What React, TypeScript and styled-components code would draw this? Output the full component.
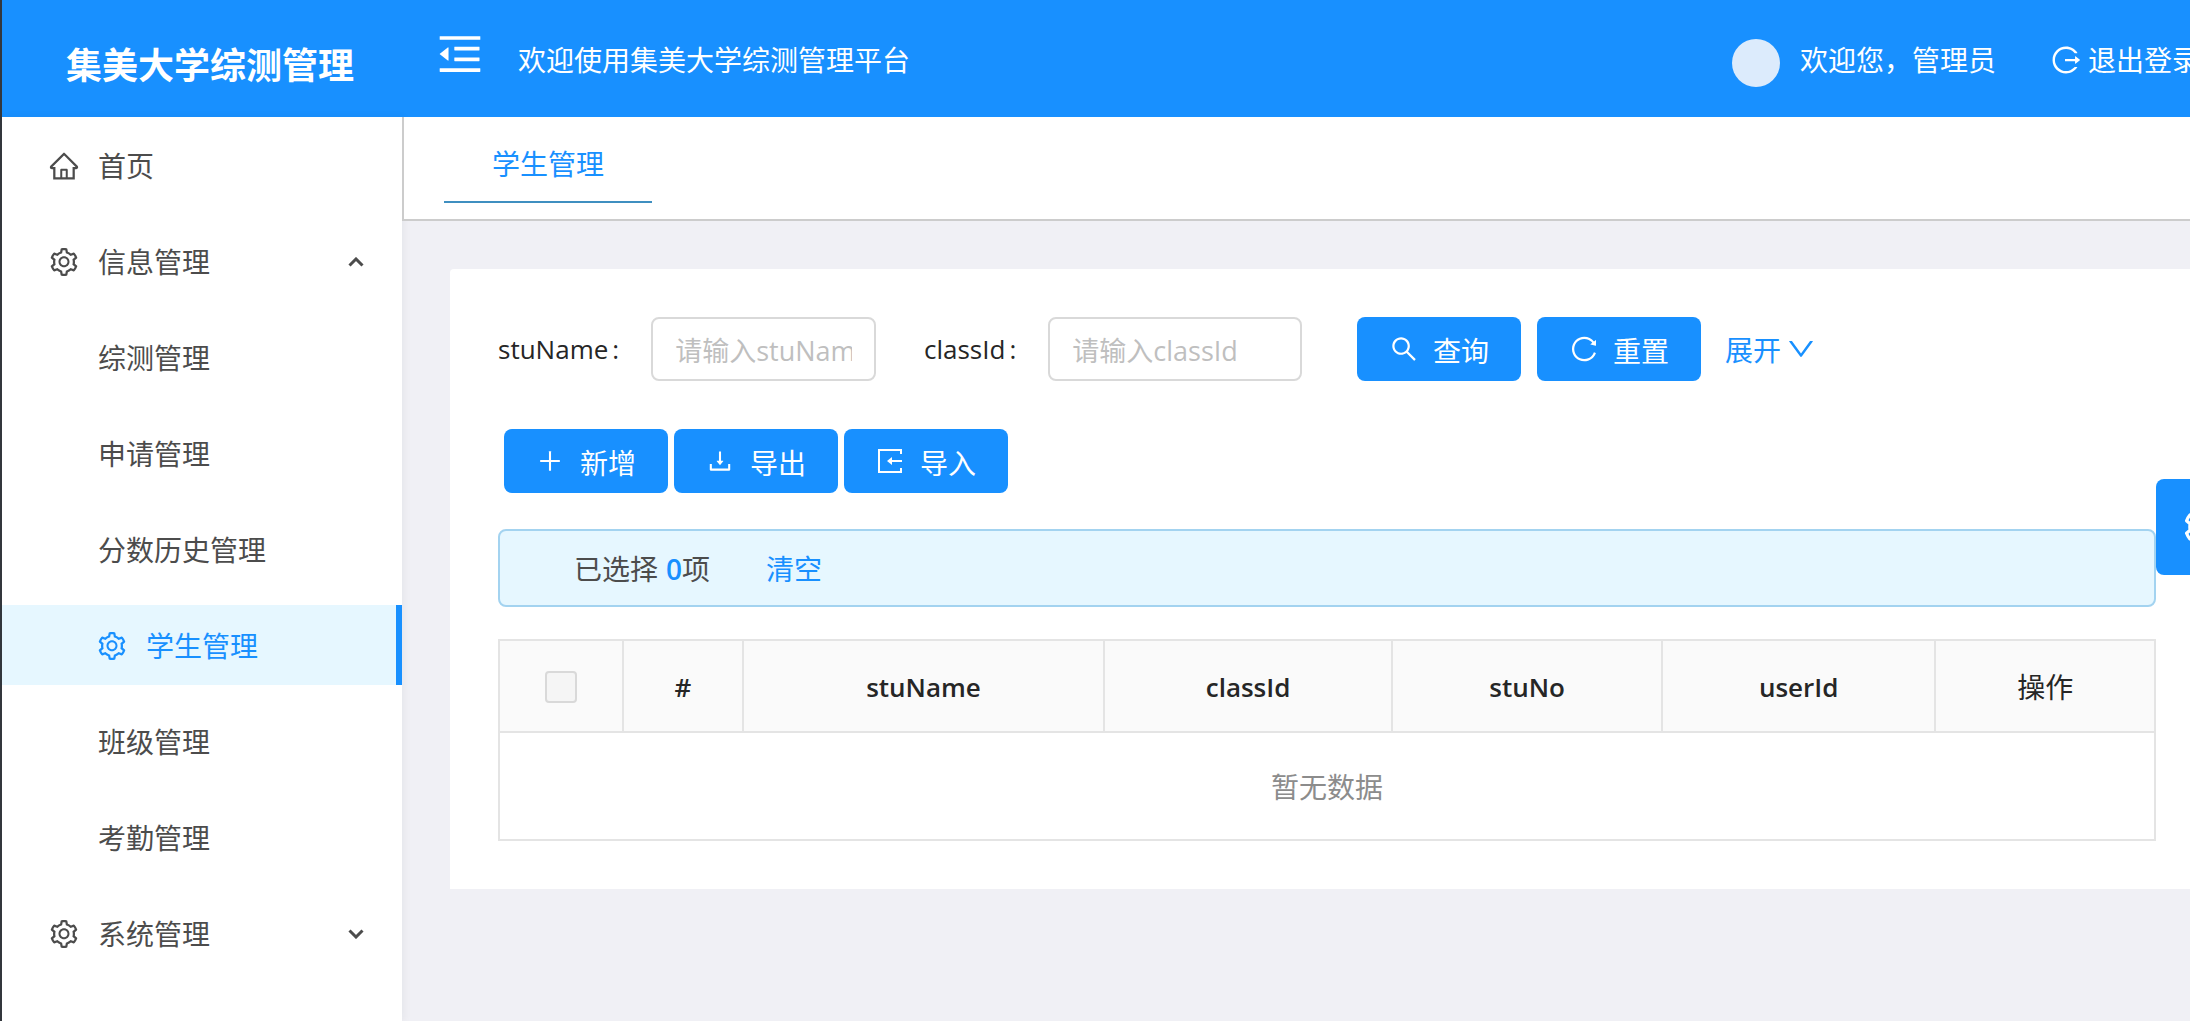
import React, { useState } from 'react';
import styled, { createGlobalStyle, css } from 'styled-components';
import {
  AiOutlineDown,
  AiOutlineDownload,
  AiOutlineHome,
  AiOutlineLogout,
  AiOutlineMenuFold,
  AiOutlinePlus,
  AiOutlineReload,
  AiOutlineSearch,
  AiOutlineSetting,
} from 'react-icons/ai';

const primary = '#1890ff';
const line = '#e4e4e4';

const GlobalStyle = createGlobalStyle`
  *, *::before, *::after { box-sizing: border-box; }
  body {
    margin: 0;
    overflow: hidden;
    font-family: "Open Sans", "Noto Sans CJK SC", sans-serif;
    font-size: 28px;
    line-height: 40px;
    color: #262626;
    background: #f0f0f5;
  }
  button, input { font: inherit; }
  button { cursor: pointer; }
  svg { flex: none; display: block; }
`;

const Page = styled.div`
  display: flex;
  flex-direction: column;
  min-height: 100vh;
  border-left: 2px solid #33373d;
`;

const Header = styled.header`
  display: flex;
  align-items: center;
  height: 117px;
  padding-top: 2px;
  background: ${primary};
  color: #fff;
  overflow: hidden;
  white-space: nowrap;
`;

const Logo = styled.h1`
  width: 400px;
  margin: 0;
  padding: 12px 0 0 64px;
  font-size: 36px;
  font-weight: 700;
`;

const FoldButton = styled.button`
  display: flex;
  margin: 0 32px 12px;
  padding: 0;
  border: 0;
  background: none;
  color: inherit;
  font-size: 52px;
`;

const UserArea = styled.div`
  display: flex;
  align-items: center;
  margin-left: auto;
  margin-right: -10px;
`;

const Avatar = styled.span`
  width: 48px;
  height: 48px;
  margin: 6px 20px 0 0;
  border-radius: 50%;
  background: #dcebfc;
`;

const Logout = styled.a`
  display: flex;
  align-items: center;
  gap: 6px;
  margin-left: 54px;
  color: inherit;
  text-decoration: none;
  svg { font-size: 32px; }
`;

const Body = styled.div`
  display: flex;
  flex: 1;
`;

const Sidebar = styled.nav`
  flex: none;
  width: 400px;
  padding: 8px 0;
  background: #fff;
  box-shadow: 2px 0 8px rgba(29, 35, 41, 0.05);
`;

const MenuList = styled.ul`
  display: flex;
  flex-direction: column;
  gap: 16px;
  margin: 0;
  padding: 0;
  list-style: none;
`;

const MenuIcon = styled.span`
  display: flex;
  margin: 0 -2px;
  font-size: 32px;
`;

const MenuLink = styled.a<{ $nested?: boolean; $active?: boolean }>`
  display: flex;
  align-items: center;
  gap: 20px;
  height: 80px;
  padding: 2px 38px 0 ${(p) => (p.$nested ? 96 : 48)}px;
  color: #4c4c4c;
  text-decoration: none;
  ${(p) =>
    p.$active &&
    css`
      color: ${primary};
      background: #e6f7ff;
      border-right: 6px solid ${primary};
    `}
`;

const Arrow = styled.svg<{ $open?: boolean }>`
  width: 16px;
  height: 10px;
  margin-left: auto;
  fill: none;
  stroke: currentColor;
  stroke-width: 3;
  ${(p) => p.$open && 'transform: rotate(180deg);'}
`;

const Main = styled.main`
  flex: 1;
  min-width: 0;
`;

const TabBar = styled.div`
  display: flex;
  align-items: flex-start;
  height: 104px;
  padding-left: 40px;
  background: #fff;
  border-left: 2px solid #ccc;
  border-bottom: 2px solid #ccc;
`;

const Tab = styled.button`
  height: 86px;
  padding: 10px 48px 0;
  border: 0;
  border-bottom: 2px solid #3f8fc0;
  background: none;
  color: ${primary};
`;

const Card = styled.section`
  margin: 48px 0 0 48px;
  padding: 48px 34px 48px 48px;
  background: #fff;
  border-radius: 4px 0 0 0;
`;

const SearchForm = styled.form`
  display: flex;
  align-items: center;
`;

const Field = styled.div`
  display: flex;
  align-items: center;
  width: 378px;
  margin-right: 48px;
`;

const FieldLabel = styled.label`
  flex: none;
  margin-right: 32px;
  font-size: 26px;
`;

const Colon = styled.span`
  margin-left: 4px;
`;

const TextInput = styled.input`
  flex: 1;
  min-width: 0;
  height: 64px;
  padding: 2px 22px 0;
  border: 2px solid #d9d9d9;
  border-radius: 8px;
  outline: 0;
  background: #fff;
  color: inherit;
  font-size: 27px;
  &::placeholder { color: #bfbfbf; opacity: 1; }
`;

const Button = styled.button<{ $large?: boolean }>`
  display: flex;
  align-items: center;
  justify-content: center;
  gap: ${(p) => (p.$large ? 14 : 16)}px;
  width: 164px;
  height: 64px;
  padding: 4px 0 0;
  border: 0;
  border-radius: 8px;
  background: ${primary};
  color: #fff;
  svg {
    margin-bottom: 4px;
    font-size: ${(p) => (p.$large ? 30 : 28)}px;
  }
`;

const SearchActions = styled.div`
  display: flex;
  align-items: center;
  gap: 16px;
  margin-left: 7px;
`;

const Link = styled.a`
  display: flex;
  align-items: center;
  gap: 4px;
  color: ${primary};
  text-decoration: none;
`;

const Expand = styled(Link)`
  margin-left: 8px;
  padding-top: 2px;
  svg {
    margin-bottom: 2px;
    font-size: 32px;
  }
`;

const Toolbar = styled.div`
  display: flex;
  gap: 6px;
  margin: 48px 6px 36px;
`;

const Alert = styled.div`
  display: flex;
  align-items: center;
  gap: 56px;
  height: 78px;
  padding: 2px 0 0 74px;
  border: 2px solid #a3d3f0;
  border-radius: 8px;
  background: #e6f7ff;
  color: #4c4c4c;
`;

const Count = styled.b`
  margin-left: 8px;
  font-weight: 600;
  font-size: 28px;
  color: ${primary};
`;

const Table = styled.table`
  width: 100%;
  margin-top: 32px;
  table-layout: fixed;
  border-collapse: separate;
  border-spacing: 0;
  border-top: 2px solid ${line};
  border-left: 2px solid ${line};
`;

const Th = styled.th<{ $width?: string; $plain?: boolean }>`
  width: ${(p) => p.$width ?? 'auto'};
  height: 92px;
  padding: 2px 0 0;
  border-right: 2px solid ${line};
  border-bottom: 2px solid ${line};
  background: #fafafa;
  font-size: ${(p) => (p.$plain ? 28 : 26)}px;
  font-weight: ${(p) => (p.$plain ? 400 : 600)};
`;

const EmptyCell = styled.td`
  height: 108px;
  padding: 2px 0 0;
  border-right: 2px solid ${line};
  border-bottom: 2px solid ${line};
  text-align: center;
  color: #8c8c8c;
`;

const CheckBox = styled.input`
  appearance: none;
  display: block;
  width: 32px;
  height: 32px;
  margin: 0 auto;
  border: 2px solid #d9d9d9;
  border-radius: 4px;
  background: #f5f5f5;
`;

const SettingHandle = styled.button`
  position: fixed;
  top: 479px;
  right: -62px;
  display: flex;
  align-items: center;
  justify-content: center;
  width: 96px;
  height: 96px;
  padding: 0;
  border: 0;
  border-radius: 8px 0 0 8px;
  background: ${primary};
  color: #fff;
  font-size: 46px;
`;

type Item = {
  text: string;
  icon?: React.ReactNode;
  nested?: boolean;
  arrow?: 'up' | 'down';
};

const items: Item[] = [
  { text: '首页', icon: <AiOutlineHome /> },
  { text: '信息管理', icon: <AiOutlineSetting />, arrow: 'up' },
  { text: '综测管理', nested: true },
  { text: '申请管理', nested: true },
  { text: '分数历史管理', nested: true },
  { text: '学生管理', icon: <AiOutlineSetting />, nested: true },
  { text: '班级管理', nested: true },
  { text: '考勤管理', nested: true },
  { text: '系统管理', icon: <AiOutlineSetting />, arrow: 'down' },
];

const columns = [
  { title: 'stuName', width: '21.8%' },
  { title: 'classId', width: '17.4%' },
  { title: 'stuNo', width: '16.3%' },
  { title: 'userId', width: '16.5%' },
];

function ImportIcon() {
  return (
    <svg width="28" height="28" viewBox="0 0 28 28" fill="none" stroke="currentColor" strokeWidth="2">
      <path d="M25 7 V3 H3 V25 H25 V21 M14 14 H26" />
      <path d="M16 10 L11 14 L16 18 Z" fill="currentColor" stroke="none" />
    </svg>
  );
}

function SearchField({ name }: { name: string }) {
  const [value, setValue] = useState('');
  return (
    <Field>
      <FieldLabel htmlFor={name}>
        {name}
        <Colon>:</Colon>
      </FieldLabel>
      <TextInput
        id={name}
        type="text"
        placeholder={`请输入${name}`}
        value={value}
        onChange={(e) => setValue(e.target.value)}
      />
    </Field>
  );
}

export default function App() {
  return (
    <>
      <GlobalStyle />
      <Page>
        <Header>
          <Logo>集美大学综测管理</Logo>
          <FoldButton type="button" aria-label="收起菜单">
            <AiOutlineMenuFold />
          </FoldButton>
          <span>欢迎使用集美大学综测管理平台</span>
          <UserArea>
            <Avatar />
            <span>欢迎您，管理员</span>
            <Logout href="#logout">
              <AiOutlineLogout />
              退出登录
            </Logout>
          </UserArea>
        </Header>
        <Body>
          <Sidebar>
            <MenuList>
              {items.map((item) => (
                <li key={item.text}>
                  <MenuLink href="#" $nested={item.nested} $active={item.text === '学生管理'}>
                    {item.icon && <MenuIcon>{item.icon}</MenuIcon>}
                    <span>{item.text}</span>
                    {item.arrow && (
                      <Arrow viewBox="0 0 16 10" $open={item.arrow === 'up'}>
                        <path d="M1.5 1.5 L8 8 L14.5 1.5" />
                      </Arrow>
                    )}
                  </MenuLink>
                </li>
              ))}
            </MenuList>
          </Sidebar>
          <Main>
            <TabBar role="tablist">
              <Tab type="button" role="tab" aria-selected>
                学生管理
              </Tab>
            </TabBar>
            <Card>
              <SearchForm onSubmit={(e) => e.preventDefault()}>
                <SearchField name="stuName" />
                <SearchField name="classId" />
                <SearchActions>
                  <Button type="submit" $large>
                    <AiOutlineSearch />
                    查询
                  </Button>
                  <Button type="reset" $large>
                    <AiOutlineReload />
                    重置
                  </Button>
                  <Expand href="#">
                    展开
                    <AiOutlineDown />
                  </Expand>
                </SearchActions>
              </SearchForm>
              <Toolbar>
                <Button type="button">
                  <AiOutlinePlus />
                  新增
                </Button>
                <Button type="button">
                  <AiOutlineDownload />
                  导出
                </Button>
                <Button type="button">
                  <ImportIcon />
                  导入
                </Button>
              </Toolbar>
              <Alert>
                <span>
                  已选择<Count>0</Count>项
                </span>
                <Link href="#">清空</Link>
              </Alert>
              <Table>
                <thead>
                  <tr>
                    <Th $width="124px">
                      <CheckBox type="checkbox" aria-label="全选" disabled />
                    </Th>
                    <Th $width="120px">#</Th>
                    {columns.map((c) => (
                      <Th key={c.title} $width={c.width}>
                        {c.title}
                      </Th>
                    ))}
                    <Th $plain>操作</Th>
                  </tr>
                </thead>
                <tbody>
                  <tr>
                    <EmptyCell colSpan={7}>暂无数据</EmptyCell>
                  </tr>
                </tbody>
              </Table>
            </Card>
          </Main>
        </Body>
      </Page>
      <SettingHandle type="button" aria-label="设置">
        <AiOutlineSetting />
      </SettingHandle>
    </>
  );
}
